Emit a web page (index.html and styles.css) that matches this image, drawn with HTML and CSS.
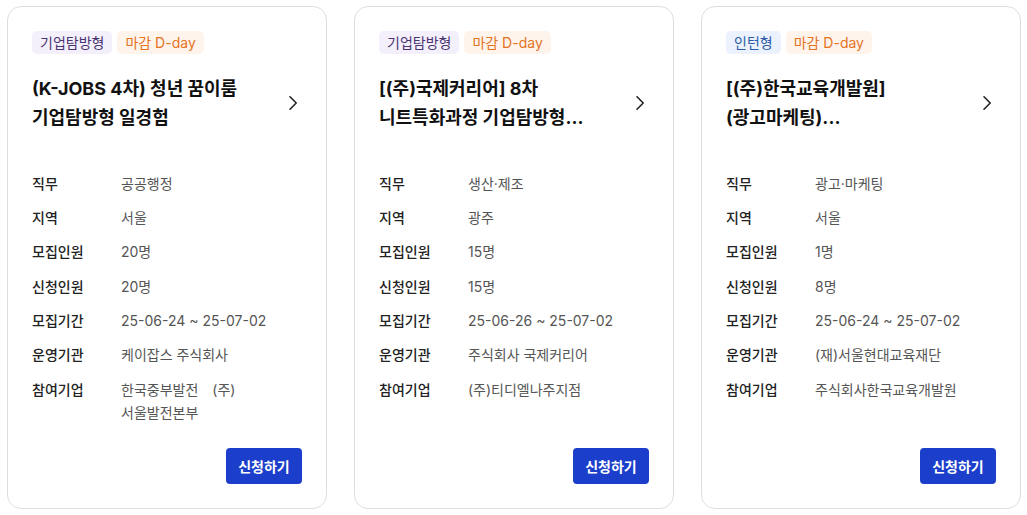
FILE: index.html
```html
<!DOCTYPE html>
<html lang="ko">
<head>
<meta charset="utf-8">
<title>프로그램 목록</title>
<link rel="stylesheet" href="styles.css">
</head>
<body>
<div class="cards">
  <article class="card">
    <div class="tags">
      <span class="tag tag-purple">기업탐방형</span>
      <span class="tag tag-orange">마감 D-day</span>
    </div>
    <div class="head">
      <h2 class="title">(K-JOBS 4차) 청년 꿈이룸 기업탐방형 일경험</h2>
      <svg class="chev" viewBox="0 0 24 24" width="24" height="24"><path d="M10 5.8l6.2 6.2L10 18.2" fill="none" stroke="#222" stroke-width="1.6" stroke-linecap="round" stroke-linejoin="round"/></svg>
    </div>
    <dl class="info">
      <dt>직무</dt><dd>공공행정</dd>
      <dt>지역</dt><dd>서울</dd>
      <dt>모집인원</dt><dd>20명</dd>
      <dt>신청인원</dt><dd>20명</dd>
      <dt>모집기간</dt><dd>25-06-24 ~ 25-07-02</dd>
      <dt>운영기관</dt><dd>케이잡스 주식회사</dd>
      <dt>참여기업</dt><dd>한국중부발전　(주) 서울발전본부</dd>
    </dl>
    <div class="actions"><button class="btn">신청하기</button></div>
  </article>
  <article class="card">
    <div class="tags">
      <span class="tag tag-purple">기업탐방형</span>
      <span class="tag tag-orange">마감 D-day</span>
    </div>
    <div class="head">
      <h2 class="title">[(주)국제커리어] 8차 니트특화과정 기업탐방형...</h2>
      <svg class="chev" viewBox="0 0 24 24" width="24" height="24"><path d="M10 5.8l6.2 6.2L10 18.2" fill="none" stroke="#222" stroke-width="1.6" stroke-linecap="round" stroke-linejoin="round"/></svg>
    </div>
    <dl class="info">
      <dt>직무</dt><dd>생산·제조</dd>
      <dt>지역</dt><dd>광주</dd>
      <dt>모집인원</dt><dd>15명</dd>
      <dt>신청인원</dt><dd>15명</dd>
      <dt>모집기간</dt><dd>25-06-26 ~ 25-07-02</dd>
      <dt>운영기관</dt><dd>주식회사 국제커리어</dd>
      <dt>참여기업</dt><dd>(주)티디엘나주지점</dd>
    </dl>
    <div class="actions"><button class="btn">신청하기</button></div>
  </article>
  <article class="card">
    <div class="tags">
      <span class="tag tag-blue">인턴형</span>
      <span class="tag tag-orange">마감 D-day</span>
    </div>
    <div class="head">
      <h2 class="title">[(주)한국교육개발원] (광고마케팅)...</h2>
      <svg class="chev" viewBox="0 0 24 24" width="24" height="24"><path d="M10 5.8l6.2 6.2L10 18.2" fill="none" stroke="#222" stroke-width="1.6" stroke-linecap="round" stroke-linejoin="round"/></svg>
    </div>
    <dl class="info">
      <dt>직무</dt><dd>광고·마케팅</dd>
      <dt>지역</dt><dd>서울</dd>
      <dt>모집인원</dt><dd>1명</dd>
      <dt>신청인원</dt><dd>8명</dd>
      <dt>모집기간</dt><dd>25-06-24 ~ 25-07-02</dd>
      <dt>운영기관</dt><dd>(재)서울현대교육재단</dd>
      <dt>참여기업</dt><dd>주식회사한국교육개발원</dd>
    </dl>
    <div class="actions"><button class="btn">신청하기</button></div>
  </article>
</div>
</body>
</html>
```
FILE: styles.css
```css
* { box-sizing: border-box; }
html, body { margin: 0; background: #fff; }
body {
  font-family: Inter, "Noto Sans CJK KR", sans-serif;
  color: #222;
}
.cards {
  display: flex;
  gap: 27px;
  padding: 6px 0 0 7px;
}
.card {
  width: 320px;
  height: 503px;
  border: 1px solid #dedede;
  border-radius: 14px;
  padding: 24px;
  display: flex;
  flex-direction: column;
}
.tags { display: flex; gap: 5px; }
.tag {
  font-size: 14px;
  line-height: 23px;
  height: 23px;
  padding: 0 8px;
  border-radius: 5px;
}
.tag-purple { background: #f3effb; color: #4a3470; }
.tag-orange { background: #fff4ec; color: #e3731f; }
.tag-blue { background: #ebf2fd; color: #2d5ca6; }
.head {
  display: flex;
  align-items: center;
  gap: 16px;
  margin-top: 20px;
}
.title {
  flex: 1;
  margin: 0;
  font-size: 18px;
  line-height: 29px;
  font-weight: 700;
  color: #111;
  word-break: keep-all;
}
.chev { flex: none; margin-right: -2px; }
.info {
  display: grid;
  grid-template-columns: 89px 1fr;
  row-gap: 11.35px;
  margin: 39.5px 0 0;
  font-size: 14px;
  line-height: 23px;
}
.info dt { font-weight: 500; color: #222; }
.info dd { margin: 0; color: #555; word-break: keep-all; }
.actions {
  margin-top: auto;
  display: flex;
  justify-content: flex-end;
}
.btn {
  font-family: inherit;
  width: 76px;
  height: 36px;
  border: 0;
  border-radius: 4px;
  background: #1c3fcb;
  color: #fff;
  font-size: 14px;
  font-weight: 700;
  padding: 0;
}
```
